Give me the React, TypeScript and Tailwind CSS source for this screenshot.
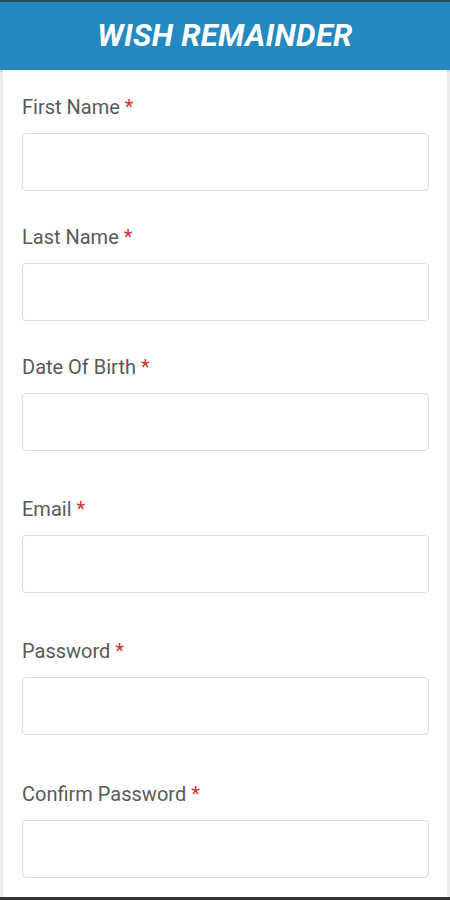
import React from "react";

const Field = ({ label, className = "" }: { label: string; className?: string }) => (
  <div className={className}>
    <div className="text-[20px] leading-[20px] text-[#5a5a5a]">
      {label} <span className="text-[#d32f2f]">*</span>
    </div>
    <div className="mt-[16px] h-[58px] rounded-[4px] border border-[#dcdcdc] bg-white" />
  </div>
);

export default function App() {
  return (
    <div className="w-[450px] h-[900px] bg-[#ececec] flex flex-col overflow-hidden" style={{ fontFamily: "Roboto, 'Noto Sans', sans-serif" }}>
      <div className="h-[2px] bg-[#234b5e]" />
      <div className="h-[68px] bg-[#2389bf] flex items-center justify-center shadow-[0_1px_2px_rgba(0,0,0,0.2)]">
        <span className="text-white text-[31px] font-bold italic tracking-[0.3px]">WISH REMAINDER</span>
      </div>
      <div className="mx-[3px] flex-1 bg-white pl-[19px] pr-[18px] pt-[27px]">
        <Field label="First Name" />
        <Field label="Last Name" className="mt-[36px]" />
        <Field label="Date Of Birth" className="mt-[36px]" />
        <Field label="Email" className="mt-[48px]" />
        <Field label="Password" className="mt-[48px]" />
        <Field label="Confirm Password" className="mt-[49px]" />
      </div>
      <div className="h-[3px] bg-[#333333]" />
    </div>
  );
}
